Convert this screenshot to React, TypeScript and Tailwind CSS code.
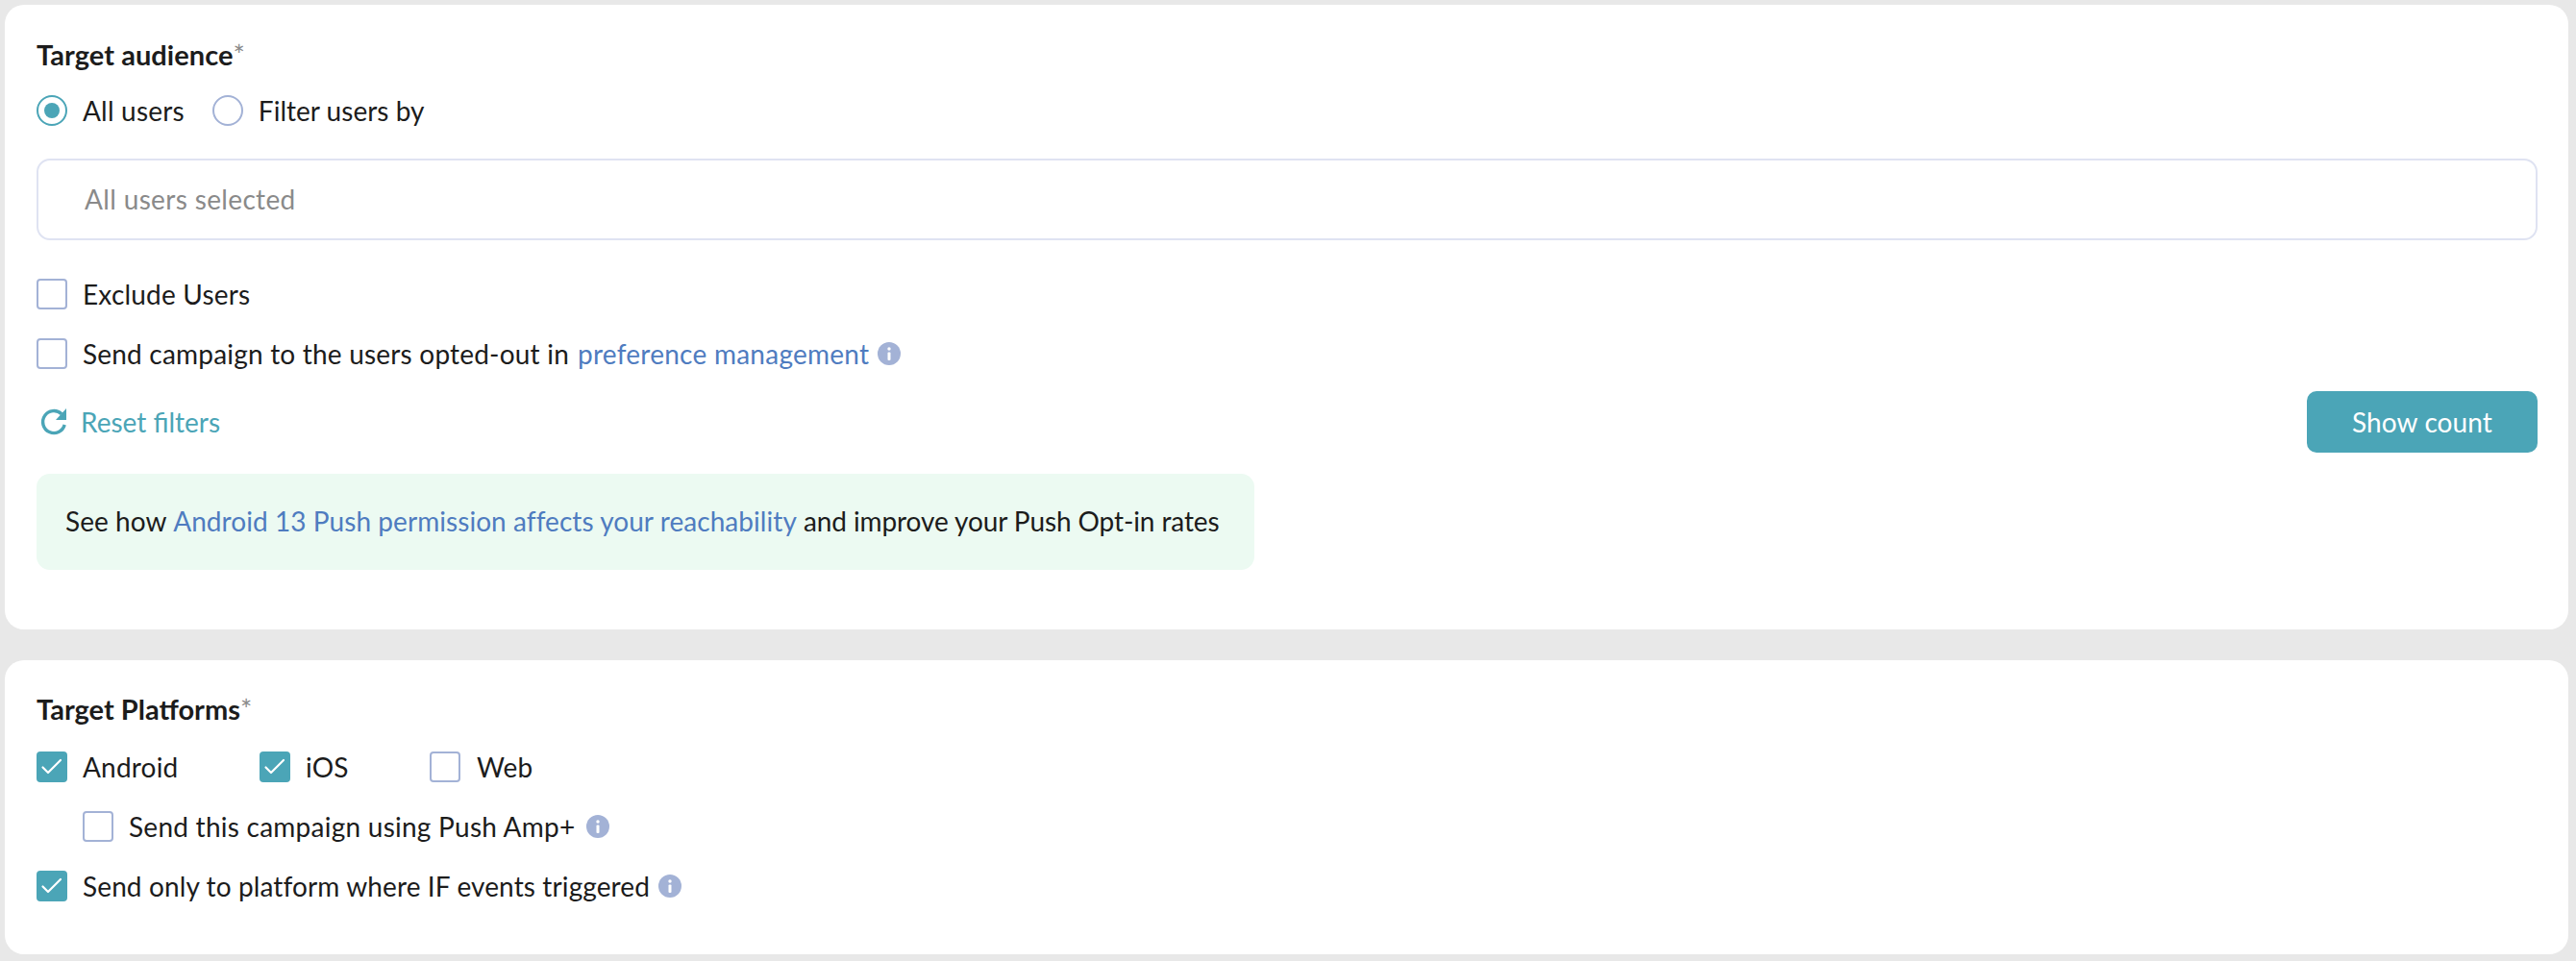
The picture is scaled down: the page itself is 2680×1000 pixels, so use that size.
import React from 'react';

const Info: React.FC = () => (
  <svg width="24" height="24" viewBox="0 0 24 24" className="shrink-0">
    <circle cx="12" cy="12" r="12" fill="#a3b2d6" />
    <circle cx="12" cy="7" r="1.7" fill="#ffffff" />
    <rect x="10.5" y="10.5" width="3" height="8.5" rx="1" fill="#ffffff" />
  </svg>
);

const Checkbox: React.FC<{ checked?: boolean }> = ({ checked }) =>
  checked ? (
    <span className="w-[32px] h-[32px] shrink-0 rounded-[4px] bg-[#4ba5b7] flex items-center justify-center">
      <svg width="32" height="32" viewBox="0 0 32 32" fill="none">
        <path d="M6.5 16.5 L12 22 L25 9" stroke="#ffffff" strokeWidth="2.2" strokeLinecap="round" strokeLinejoin="round" />
      </svg>
    </span>
  ) : (
    <span className="w-[32px] h-[32px] shrink-0 rounded-[4px] bg-white border-2 border-[#a3b2d6]" />
  );

const Radio: React.FC<{ checked?: boolean }> = ({ checked }) => (
  <span
    className={`w-[32px] h-[32px] shrink-0 rounded-full bg-white border-2 flex items-center justify-center ${
      checked ? 'border-[#4ba5b7]' : 'border-[#a3b2d6]'
    }`}
  >
    {checked && <span className="w-[16px] h-[16px] rounded-full bg-[#4ba5b7]" />}
  </span>
);

const Title: React.FC<{ text: string; className?: string }> = ({ text, className }) => (
  <div className={`h-[32px] flex items-center text-[29px] font-bold text-[#1c1c1c] ${className || ''}`}>
    {text}
    <span className="font-normal text-[#8a8a8a]">*</span>
  </div>
);

const Label: React.FC<{ children: React.ReactNode; className?: string }> = ({ children, className }) => (
  <span className={`text-[28px] leading-[32px] text-[#1c1c1c] whitespace-nowrap ${className || 'tracking-[0.2px]'}`}>{children}</span>
);

export default function App() {
  return (
    <div className="min-h-[1000px] bg-[#e8e8e8] pt-[5px] pl-[5px] pr-[8px] font-['Lato',sans-serif]">
      {/* Target audience */}
      <section className="h-[650px] bg-white rounded-[20px] pt-[36px] pl-[33px] pr-[32px]">
        <Title text="Target audience" className="tracking-[0.05px]" />

        <div className="flex items-center mt-[26px]">
          <Radio checked />
          <Label className="ml-[16px] tracking-[0.2px]">All users</Label>
          <span className="ml-[29px]"><Radio /></span>
          <Label className="ml-[16px] tracking-[0.02px]">Filter users by</Label>
        </div>

        <div className="h-[85px] mt-[34px] pb-[2px] rounded-[14px] border-2 border-[#dfe3f2] flex items-center pl-[48px] text-[28px] tracking-[0.35px] text-[#8a8a8a]">
          All users selected
        </div>

        <div className="flex items-center mt-[40px]">
          <Checkbox />
          <Label className="ml-[16px] tracking-[0.2px]">Exclude Users</Label>
        </div>

        <div className="flex items-center mt-[30px]">
          <Checkbox />
          <Label className="ml-[16px] tracking-[0.2px]">Send campaign to the users opted-out in</Label>
          <span className="ml-[9px] text-[28px] leading-[32px] tracking-[0.25px] text-[#4f7cc0] whitespace-nowrap">preference management</span>
          <span className="ml-[9px]"><Info /></span>
        </div>

        <div className="flex items-center justify-between mt-[23px]">
          <div className="flex items-center">
            <svg width="32" height="32" viewBox="0 0 32 32" fill="none" className="ml-[2px]">
              <path d="M24 7.7 A11.5 11.5 0 1 0 27.2 19" stroke="#4ba5b7" strokeWidth="3.4" />
              <path d="M29 2 V14 H18 Z" fill="#4ba5b7" />
            </svg>
            <span className="ml-[12px] text-[28px] text-[#4ba5b7]">Reset filters</span>
          </div>
          <button className="w-[240px] h-[64px] rounded-[10px] bg-[#4ba5b7] text-white text-[28px] tracking-[0.1px]">Show count</button>
        </div>

        <div className="w-[1267px] h-[100px] mt-[22px] pb-[2px] rounded-[14px] bg-[#ecfaf2] flex items-center pl-[30px] text-[28px] tracking-[0.06px] text-[#1c1c1c] whitespace-nowrap">
          See how&nbsp;<span className="text-[#4f7cc0]">Android 13 Push permission affects your reachability</span>
          <span className="tracking-[-0.1px]">&nbsp;and improve your Push Opt-in rates</span>
        </div>
      </section>

      {/* Target platforms */}
      <section className="h-[306px] mt-[32px] bg-white rounded-[20px] pt-[35px] pl-[33px] pr-[32px]">
        <Title text="Target Platforms" />

        <div className="flex items-center mt-[28px]">
          <Checkbox checked />
          <Label className="ml-[16px] w-[184px] tracking-[0.2px]">Android</Label>
          <Checkbox checked />
          <Label className="ml-[16px] w-[129px] tracking-[0.2px]">iOS</Label>
          <Checkbox />
          <Label className="ml-[17px] tracking-[0.2px]">Web</Label>
        </div>

        <div className="flex items-center mt-[30px] ml-[48px]">
          <Checkbox />
          <Label className="ml-[16px] tracking-[0.25px]">Send this campaign using Push Amp+</Label>
          <span className="ml-[12px]"><Info /></span>
        </div>

        <div className="flex items-center mt-[30px]">
          <Checkbox checked />
          <Label className="ml-[16px] tracking-[0.12px]">Send only to platform where IF events triggered</Label>
          <span className="ml-[9px]"><Info /></span>
        </div>
      </section>
    </div>
  );
}
